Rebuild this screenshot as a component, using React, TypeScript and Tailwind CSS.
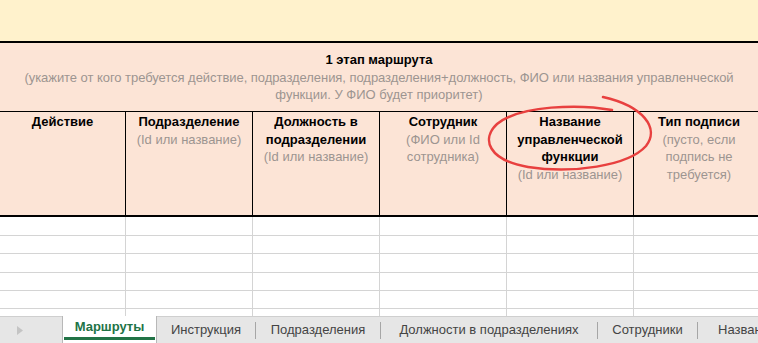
import React from "react";

const font = { fontFamily: '"Liberation Sans", Arial, sans-serif' };

type Col = { w: string; title: string[]; note: string[] };

const cols: Col[] = [
  { w: "w-[126px]", title: ["Действие"], note: [] },
  { w: "w-[127px]", title: ["Подразделение"], note: ["(Id или название)"] },
  { w: "w-[127px]", title: ["Должность в", "подразделении"], note: ["(Id или название)"] },
  { w: "w-[127px]", title: ["Сотрудник"], note: ["(ФИО или Id", "сотрудника)"] },
  { w: "w-[127px]", title: ["Название", "управленческой", "функции"], note: ["(Id или название)"] },
  { w: "w-[130px]", title: ["Тип подписи"], note: ["(пусто, если", "подпись не", "требуется)"] },
];

const tabs = [
  { name: "Инструкция", w: "w-[99px]" },
  { name: "Подразделения", w: "w-[125px]" },
  { name: "Должности в подразделениях", w: "w-[217px]" },
  { name: "Сотрудники", w: "w-[100px]" },
];

function GridRow({ h = "h-[18px]" }: { h?: string }) {
  return (
    <div className={`flex ${h} border-b border-[#d4d4d4] shrink-0`}>
      {cols.map((c, i) => (
        <div key={i} className={`${c.w} shrink-0 ${i < cols.length - 1 ? "border-r border-[#d4d4d4]" : ""}`} />
      ))}
    </div>
  );
}

export default function App() {
  return (
    <div className="relative w-[758px] h-[343px] overflow-hidden bg-white flex flex-col text-[13px]" style={font}>
      {/* жёлтая шапка */}
      <div className="h-[41px] bg-[#fff2cc] shrink-0" />
      <div className="h-[2px] bg-black shrink-0" />

      {/* заголовок этапа */}
      <div className="h-[69px] bg-[#fce4d6] shrink-0 border-b border-black pt-[8px] text-center leading-[17.5px] w-[758px]">
        <div className="font-bold text-black">1 этап маршрута</div>
        <div className="text-[#9c9591] whitespace-nowrap tracking-[-0.05px]">
          (укажите от кого требуется действие, подразделения, подразделения+должность, ФИО или названия управленческой
        </div>
        <div className="text-[#9c9591]">функции. У ФИО будет приоритет)</div>
      </div>

      {/* шапка колонок */}
      <div className="flex h-[105px] bg-[#fce4d6] border-b-2 border-black shrink-0">
        {cols.map((c, i) => (
          <div
            key={i}
            className={`${c.w} shrink-0 text-center leading-[17.5px] pt-[1px] ${i < cols.length - 1 ? "border-r border-black" : ""}`}
          >
            {c.title.map((t) => (
              <div key={t} className="font-bold text-black">{t}</div>
            ))}
            {c.note.map((t) => (
              <div key={t} className="text-[#9c9591]">{t}</div>
            ))}
          </div>
        ))}
      </div>

      {/* пустые строки */}
      <div className="flex flex-col flex-1 overflow-hidden">
        <GridRow h="h-[19px]" />
        <GridRow />
        <GridRow h="h-[19px]" />
        <GridRow />
        <GridRow />
        <GridRow h="h-[12px]" />
      </div>

      {/* ярлыки листов */}
      <div className="h-[27px] shrink-0 bg-[#e6e6e6] border-t border-[#cfcfcf] flex items-stretch text-[13px] text-[#444]">
        <div className="w-[62px] shrink-0 flex items-center pl-[17px]">
          <svg width="6" height="9" viewBox="0 0 6 9">
            <path d="M0 0 L6 4.5 L0 9 Z" fill="#c4c4c4" />
          </svg>
        </div>
        <div className="w-[95px] shrink-0 -mt-px bg-white border-x border-[#b8b8b8] flex flex-col">
          <div className="flex-1 flex items-center justify-center font-bold text-[#217346]">Маршруты</div>
          <div className="h-[3px] bg-[#217346] mb-[3px] mx-[1px]" />
        </div>
        {tabs.map((t) => (
          <div key={t.name} className={`${t.w} shrink-0 flex items-center`}>
            <div className="flex-1 text-center whitespace-nowrap">{t.name}</div>
            <div className="w-px h-[17px] bg-[#a6a6a6]" />
          </div>
        ))}
        <div className="flex-1 min-w-0 flex items-center pl-[20px] overflow-hidden">
          <span className="whitespace-nowrap">Назван</span>
        </div>
      </div>

      {/* красный круг от руки */}
      <svg className="absolute left-0 top-0 pointer-events-none" width="758" height="343" viewBox="0 0 758 343">
        <path
          d="M612 110 C580 104, 520 105, 497 124 C481 139, 488 160, 528 167 C572 174, 628 166, 646 146 C660 128, 643 106, 603 97"
          fill="none"
          stroke="#e8403f"
          strokeWidth="2.5"
          strokeLinecap="round"
        />
      </svg>
    </div>
  );
}
